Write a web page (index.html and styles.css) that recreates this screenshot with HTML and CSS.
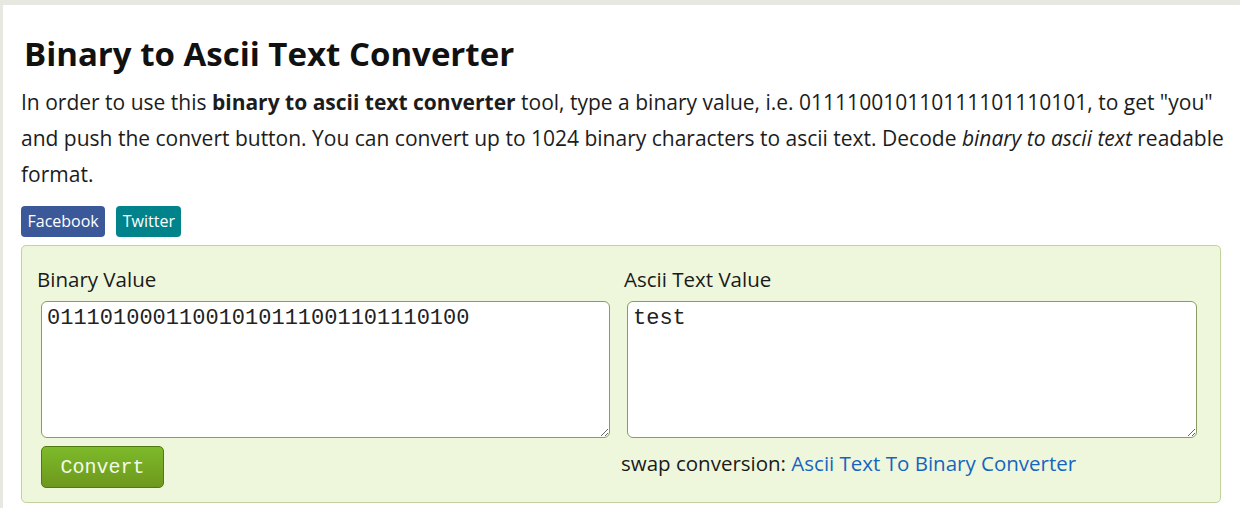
FILE: index.html
```html
<!DOCTYPE html>
<html>
<head>
<meta charset="utf-8">
<title>Binary to Ascii Text Converter</title>
<link rel="stylesheet" href="styles.css">
</head>
<body>
<div class="page">
  <h1 class="title">Binary to Ascii Text Converter</h1>
  <p class="intro">In order to use this <b>binary to ascii text converter</b> tool, type a binary value, i.e. 011110010110111101110101, to get "you" and push the convert button. You can convert up to 1024 binary characters to ascii text. Decode <i>binary to ascii text</i> readable format.</p>
  <div class="share">
    <a class="share-btn facebook" href="#">Facebook</a>
    <a class="share-btn twitter" href="#">Twitter</a>
  </div>
  <div class="box">
    <div class="col">
      <label class="field-label">Binary Value</label>
      <textarea class="field field-left">01110100011001010111001101110100</textarea>
      <div class="actions"><button class="convert">Convert</button></div>
    </div>
    <div class="col">
      <label class="field-label right">Ascii Text Value</label>
      <textarea class="field field-right">test</textarea>
      <div class="swap">swap conversion: <a href="#">Ascii Text To Binary Converter</a></div>
    </div>
  </div>
</div>
</body>
</html>
```

FILE: styles.css
```css
html, body {
  margin: 0;
  padding: 0;
}
body {
  background: #e8e8e3;
  font-family: "Open Sans", "Noto Sans", sans-serif;
  color: #212121;
}
.page {
  background: #ffffff;
  margin: 5px 0 0 3px;
  padding: 29px 0 20px 18px;
  min-height: 520px;
  box-sizing: border-box;
}
.title {
  margin: 0 0 0 3px;
  font-size: 33px;
  line-height: 40px;
  font-weight: 700;
  color: #111;
}
.intro {
  margin: 10px 0 0 0;
  font-size: 21px;
  line-height: 36px;
  width: 1205px;
  color: #1c1c1c;
}
.share {
  display: flex;
  gap: 11px;
  margin-top: 14px;
}
.share-btn {
  display: inline-block;
  color: #fff;
  text-decoration: none;
  font-size: 16px;
  line-height: 31px;
  padding: 0 6.5px;
  border-radius: 4px;
}
.facebook { background: #3b5998; }
.twitter { background: #00838a; }
.box {
  margin-top: 8px;
  width: 1200px;
  box-sizing: border-box;
  background: #eef7dc;
  border: 1px solid #c3d0a0;
  border-radius: 5px;
  padding: 20px 15px 14px 15px;
  display: grid;
  grid-template-columns: 584px 584px;
}
.col {
  display: flex;
  flex-direction: column;
}
.field-label {
  font-size: 20.5px;
  line-height: 26px;
  color: #1a1a1a;
}
.field-label.right { margin-left: 3px; }
.field {
  margin-top: 9px;
  height: 137px;
  box-sizing: border-box;
  border: 1px solid #8c9a64;
  border-radius: 6px;
  background: #fff;
  font-family: "Liberation Mono", "Courier New", monospace;
  font-size: 22px;
  line-height: 26px;
  color: #222;
  padding: 4px 5px;
  resize: vertical;
}
.field-left { margin-left: 4px; width: 569px; }
.field-right { margin-left: 6px; width: 570px; }
.actions { margin-top: 8px; margin-left: 4px; }
.convert {
  width: 123px;
  height: 42px;
  border: 1px solid #4e7a10;
  border-radius: 5px;
  background: linear-gradient(#7dba2a, #6e981d);
  color: #f4faea;
  font-family: "Liberation Mono", "Courier New", monospace;
  font-size: 20px;
  padding: 0;
}
.swap {
  margin-top: 12px;
  font-size: 20.5px;
  line-height: 26px;
  color: #1a1a1a;
}
.swap a {
  color: #1565c0;
  text-decoration: none;
}
```
